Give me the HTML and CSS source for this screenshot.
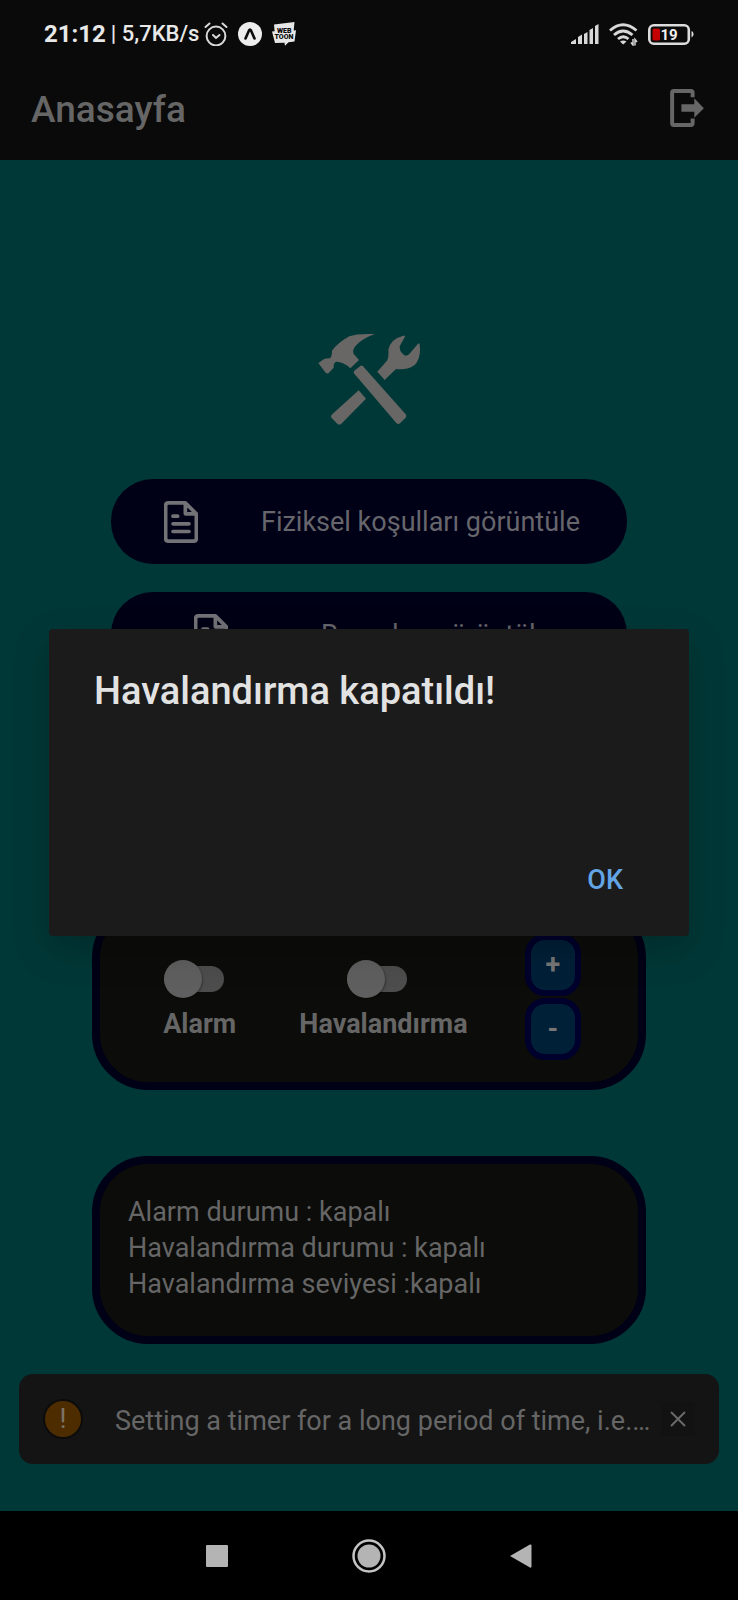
FILE: index.html
```html
<!DOCTYPE html>
<html lang="tr">
<head>
<meta charset="utf-8">
<meta name="viewport" content="width=device-width, initial-scale=1">
<title>Anasayfa</title>
<link rel="stylesheet" href="styles.css">
</head>
<body class="screen">
<div class="status-bar">
  <div class="status-left">
    <span class="clock">21:12</span>
    <span class="net-speed">| 5,7KB/s</span>
    <svg class="status-icon" viewBox="0 0 24 24" width="24" height="24" fill="none" stroke="#d8d8d8" stroke-width="2" stroke-linecap="round">
      <circle cx="12" cy="14" r="9.4"/><path d="M9 13l3 3 3.500-3M1.500 5l4-3.500M22.500 5l-4-3.500"/>
    </svg>
    <svg class="status-icon" viewBox="0 0 24 24" width="24" height="24">
      <circle cx="12" cy="12" r="12" fill="#ededed"/><path d="M7.500 16.500L11 8.500q1-1.800 2 0l3.500 8" fill="none" stroke="#0a0a0a" stroke-width="2.600" stroke-linecap="round"/>
    </svg>
    <svg class="status-icon" viewBox="0 0 24 24" width="24" height="24">
      <path d="M2 2.500L22.500 0l-.8 8.500 2.300-.2-1.500 11.200-6 .8-3.500 3.500-.5-3-9.500.2L0 9.500l2.600-.2z" fill="#e6e6e6"/>
      <g fill="#0a0a0a" font-family="Roboto, sans-serif" font-weight="900" font-size="7"><text x="5" y="11">WEB</text><text x="2.500" y="17">TOON</text></g>
    </svg>
  </div>
  <div class="status-right">
    <svg viewBox="0 0 28 20" width="28" height="20" fill="#d8d8d8"><path d="M0 20v-2l5-3v5zM7 20v-7l4-2.500V20zM13 20v-10l3.500-2V20zM18.500 20V6l3.500-2v16zM24 20V2l3.500-2v20z"/></svg>
    <svg viewBox="0 0 29 23" width="29" height="23" fill="none" stroke="#d8d8d8" stroke-width="2.800">
      <path d="M1 7.500q13-11.500 26.500 0M5 12q9-8 18.500 0M9 16q5.300-4.500 10.500 0"/><path d="M11 18.500q3.300-2 6.500 0l-3.300 3z" fill="#d8d8d8" stroke="none"/><path d="M24 16v6l-2-2.500M26 22.500v-6l2 2.500" stroke-width="1.500"/>
    </svg>
    <svg viewBox="0 0 46 21" width="46" height="21">
      <rect x="1.300" y="1.300" width="39.500" height="18.400" rx="4.500" fill="none" stroke="#dcdcdc" stroke-width="2.600"/><rect x="4.500" y="4.500" width="7.500" height="12" rx="1.500" fill="#c40000"/><path d="M43.500 7v6.500q2-.5 2-3.200t-2-3.300z" fill="#dcdcdc"/>
      <text x="12.500" y="16" fill="#f0f0f0" font-family="Roboto, sans-serif" font-weight="700" font-size="15">19</text>
    </svg>
  </div>
</div>
<header class="app-bar">
  <h1 class="app-title">Anasayfa</h1>
  <button class="icon-button" aria-label="Çıkış">
    <svg viewBox="904 266 102 115" width="34" height="38"><path d="M972 291V277q0-5-5-5h-52q-5 0-5 5v93q0 5 5 5h52q5 0 5-5v-15" fill="none" stroke="#666" stroke-width="12"/><path d="M938 312h39v-18l29 30-29 29v-18h-39z" fill="#666"/></svg>
  </button>
</header>
<main class="home">
  <svg class="tools" viewBox="84 70 309 276" width="103" height="92" fill="#696765">
    <path d="M85 160L104 147l15-1q7-4 7-23 18-24 52-43 22-9 76-7-40 15-58 37-10 12-5 23l16 18-26 25q-20-20-42-20-9 2-8 18l-15 16q-5 3-9-1z"/>
    <path d="M193 183l18-14q4-3 8 1l128 144q4 5 0 10l-17 17q-6 4-11-1L193 192q-4-5 0-9z"/>
    <path d="M262 186l30-34q5-12 3-32 6-32 45-42 6-1 4 5l-15 27q-1 18 17 28 8 0 12-5l26-31q4-3 5 3 5 38-14 60-22 17-57 13l-34 33z"/>
    <path d="M206 242l22 25-74 75q-6 5-12 0l-17-17q-4-5 0-10z"/>
  </svg>
  <nav class="actions">
    <button class="action">
      <svg class="doc-icon" viewBox="226 123 102 125" width="34" height="42" fill="none" stroke="currentColor" stroke-width="11" stroke-linecap="round" stroke-linejoin="round"><path d="M239 128h51l33 33v74q0 8-8 8h-76q-8 0-8-8v-99q0-8 8-8zM290 130v31h31M253 168h14M253 191h48M253 214h48"/></svg>
      <span>Fiziksel koşulları görüntüle</span>
    </button>
    <button class="action">
      <svg class="doc-icon" viewBox="226 123 102 125" width="34" height="42" fill="none" stroke="currentColor" stroke-width="11" stroke-linecap="round" stroke-linejoin="round"><path d="M239 128h51l33 33v74q0 8-8 8h-76q-8 0-8-8v-99q0-8 8-8zM290 130v31h31M253 168h14M253 191h48M253 214h48"/></svg>
      <span>Raporları görüntüle</span>
    </button>
  </nav>
  <section class="panel controls">
    <label class="toggle"><input class="switch" type="checkbox"><span>Alarm</span></label>
    <label class="toggle"><input class="switch" type="checkbox"><span>Havalandırma</span></label>
    <div class="stepper">
      <button class="step">+</button>
      <button class="step">-</button>
    </div>
  </section>
  <section class="panel readout">
    <p>Alarm durumu : kapalı</p>
    <p>Havalandırma durumu : kapalı</p>
    <p>Havalandırma seviyesi :kapalı</p>
  </section>
  <aside class="toast">
    <span class="warn">!</span>
    <span class="toast-text">Setting a timer for a long period of time, i.e.…</span>
    <button class="toast-close" aria-label="Kapat"><svg viewBox="0 0 16 16" width="16" height="16" fill="none" stroke="#696969" stroke-width="2"><path d="M1 1l14 14M15 1L1 15"/></svg></button>
  </aside>
</main>
<nav class="system-nav">
  <button class="icon-button" aria-label="Son uygulamalar"><svg viewBox="0 0 22 22" width="22" height="22"><rect width="22" height="22" rx="1" fill="#b4b4b4"/></svg></button>
  <button class="icon-button" aria-label="Ana ekran"><svg viewBox="0 0 34 34" width="34" height="34"><circle cx="17" cy="17" r="15.500" fill="none" stroke="#c4c4c4" stroke-width="2.500"/><circle cx="17" cy="17" r="11.500" fill="#b4b4b4"/></svg></button>
  <button class="icon-button" aria-label="Geri"><svg viewBox="0 0 22 24" width="22" height="24"><path d="M0 12L20 0.500q1.500-.5 1.500 1v21q0 1.500-1.500 1z" fill="#b4b4b4"/></svg></button>
</nav>
<div class="overlay">
  <div class="dialog" role="alertdialog" aria-labelledby="dialog-title">
    <h2 class="dialog-title" id="dialog-title">Havalandırma kapatıldı!</h2>
    <button class="dialog-ok">OK</button>
  </div>
</div>
</body>
</html>
```
FILE: styles.css
```css
* { box-sizing: border-box; }

.screen {
  position: relative;
  display: flex;
  flex-direction: column;
  min-height: 100vh;
  margin: 0;
  background: #003837;
  font-family: Roboto, "Noto Sans", sans-serif;
  font-size: 27px;
  line-height: 36px;
  color: #666;
}

button {
  padding: 0;
  border: 0;
  background: none;
  font: inherit;
  color: inherit;
}

svg { display: block; flex: none; }
h1, h2, p { margin: 0; }

.status-bar {
  display: flex;
  justify-content: space-between;
  align-items: center;
  height: 68px;
  padding: 0 44px;
  background: #0a0a0a;
  color: #e8e8e8;
}

.status-left { display: flex; align-items: center; font-weight: 500; }
.clock { font-size: 24px; font-weight: 700; margin-right: 5px; }
.net-speed { font-size: 22px; margin-right: 5px; }
.status-icon { margin-right: 10px; }
.status-right { display: flex; align-items: center; gap: 10px; }

.app-bar {
  display: flex;
  justify-content: space-between;
  align-items: center;
  height: 92px;
  padding: 0 34px 12px 31px;
  background: #0a0a0a;
}

.app-title { padding-top: 4px; font-size: 37px; font-weight: 500; line-height: 44px; }

.home {
  flex: 1;
  display: flex;
  flex-direction: column;
  align-items: center;
  padding: 173px 19px 47px;
}

.actions {
  display: flex;
  flex-direction: column;
  gap: 28px;
  width: 516px;
  max-width: 100%;
  margin-top: 54px;
}

.action {
  display: flex;
  justify-content: space-evenly;
  align-items: center;
  height: 85px;
  border-radius: 42px;
  background: #000016;
  color: #66666c;
}

.doc-icon { margin: 0 16px 0 6px; color: #737377; }

.panel {
  width: 554px;
  max-width: 100%;
  min-height: 188px;
  border: 8px solid #000016;
  border-radius: 56px;
  background: #0c0c0a;
}

.controls {
  display: flex;
  justify-content: space-evenly;
  align-items: center;
  margin-top: 225px;
}

.toggle {
  display: flex;
  flex-direction: column;
  align-items: center;
  gap: 14px;
  padding: 16px 0 0 6px;
  font-weight: 700;
}

.switch {
  appearance: none;
  position: relative;
  width: 60px;
  height: 26px;
  margin: 0 12px 0 0;
  border-radius: 13px;
  background: #4d4d4d;
}

.switch::before {
  content: "";
  position: absolute;
  top: -6px;
  left: 0;
  width: 38px;
  height: 38px;
  border-radius: 50%;
  background: #5f5f5f;
  box-shadow: 1px 1px 2px rgba(0, 0, 0, 0.3);
}

.stepper { display: flex; flex-direction: column; gap: 2px; padding-top: 2px; }

.step {
  width: 56px;
  height: 62px;
  border: 6px solid #00002c;
  border-radius: 20px;
  background: #002038;
  color: #777;
  font-weight: 700;
}

.readout { margin-top: 66px; padding: 30px 28px; }

.toast {
  display: flex;
  align-items: center;
  width: 100%;
  height: 90px;
  margin-top: auto;
  padding: 0 24px;
  border-radius: 14px;
  background: #141414;
}

.warn {
  flex: none;
  width: 40px;
  height: 40px;
  border: 2px solid #0c0c0c;
  border-radius: 50%;
  background: #4d2c00;
  color: #7d7468;
  text-align: center;
}

.toast-text {
  flex: 1;
  min-width: 0;
  margin-left: 32px;
  padding-top: 3px;
  overflow: hidden;
  text-overflow: ellipsis;
  white-space: nowrap;
}

.toast-close {
  display: grid;
  place-items: center;
  width: 34px;
  height: 34px;
  background: #121212;
}

.system-nav {
  display: flex;
  justify-content: center;
  align-items: center;
  gap: 124px;
  height: 89px;
  background: #000;
}

.overlay {
  position: absolute;
  inset: 0;
  display: flex;
  align-items: center;
  padding: 54px 49px 89px;
}

.dialog {
  display: flex;
  flex-direction: column;
  justify-content: space-between;
  width: 100%;
  min-height: 307px;
  padding: 40px 66px 38px 45px;
  border-radius: 4px;
  background: #1b1b1b;
  box-shadow: 0 14px 36px rgba(0, 0, 0, 0.22);
}

.dialog-title {
  font-size: 38px;
  font-weight: 500;
  line-height: 44px;
  color: #e2e2e2;
}

.dialog-ok { align-self: flex-end; font-weight: 500; color: #63a4e4; }
```
